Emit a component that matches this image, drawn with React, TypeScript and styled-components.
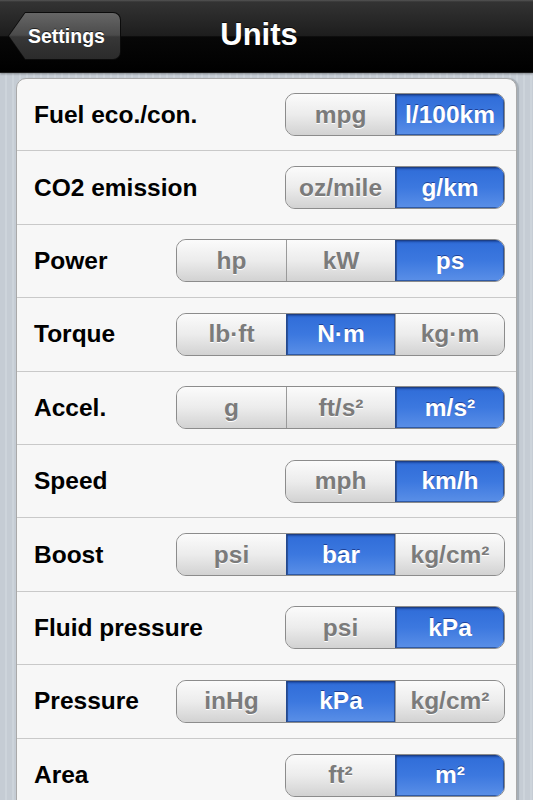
import React, { useState } from 'react';
import styled, { createGlobalStyle } from 'styled-components';

const GlobalStyle = createGlobalStyle`
  html, body {
    margin: 0;
    padding: 0;
    overflow: hidden;
  }
  body {
    font-family: "Liberation Sans", Arial, Helvetica, sans-serif;
    background: repeating-linear-gradient(90deg, #c5ccd4 0 5px, #cdd4db 5px 7px);
  }
  * {
    box-sizing: border-box;
  }
`;

const Screen = styled.div`
  width: 533px;
  min-height: 800px;
  display: flex;
  flex-direction: column;
`;

const NavBar = styled.div`
  height: 73px;
  display: grid;
  grid-template-columns: 1fr auto 1fr;
  align-items: center;
  padding: 0 8px;
  background: linear-gradient(#555 0, #333 2px, #1d1d1d 50%, #070707 51%, #000 100%);
  border-bottom: 1px solid #1e1e1e;
  box-shadow: 0 1px 2px rgba(0, 0, 0, 0.35);
`;

const BackButton = styled.button`
  justify-self: start;
  width: 113px;
  height: 48px;
  padding: 1px;
  border: none;
  border-radius: 0 8px 8px 0;
  background: #0c0c0c;
  clip-path: polygon(17px 0, 100% 0, 100% 100%, 17px 100%, 0 50%);
  cursor: pointer;
`;

const BackFace = styled.span`
  display: flex;
  align-items: center;
  height: 100%;
  padding-left: 19px;
  border-radius: 0 7px 7px 0;
  clip-path: polygon(16.3px 0, 100% 0, 100% 100%, 16.3px 100%, 0 50%);
  background: linear-gradient(#666 0, #4b4b4b 48%, #373737 52%, #2b2b2b 100%);
  color: #fff;
  font-family: "Liberation Sans", Arial, sans-serif;
  font-weight: bold;
  font-size: 19.5px;
  text-shadow: 0 -1px 0 rgba(0, 0, 0, 0.6);
`;

const Title = styled.h1`
  margin: 0 15px 2px 0;
  color: #fff;
  font-size: 31px;
  font-weight: bold;
  text-shadow: 0 -1px 0 rgba(0, 0, 0, 0.7);
`;

const Card = styled.div`
  margin: 5px 16px 0;
  background: #f7f7f7;
  border: 1px solid #a9a9a9;
  border-radius: 10px;
  box-shadow: 2px 0 1px rgba(120, 128, 138, 0.45);
`;

const Row = styled.div`
  height: 73.4px;
  display: flex;
  align-items: center;
  justify-content: space-between;
  padding: 0 11px 0 17px;
  border-bottom: 1px solid #c9c9c9;

  &:first-child {
    height: 72.4px;
  }
  &:last-child {
    border-bottom: none;
  }
`;

const Label = styled.span`
  font-size: 24.5px;
  font-weight: bold;
  color: #000;
`;

const Segmented = styled.div`
  display: flex;
  height: 43px;
  border: 1px solid #8c8c8c;
  border-radius: 10px;
  overflow: hidden;
  background: #ddd;
`;

const Segment = styled.button<{ $active: boolean }>`
  width: 109px;
  height: 100%;
  margin: 0;
  padding: 0;
  border: none;
  border-left: 1px solid ${(p) => (p.$active ? '#24498f' : '#9a9a9a')};
  font-family: "Liberation Sans", Arial, sans-serif;
  font-size: 24.5px;
  font-weight: bold;
  cursor: pointer;
  color: ${(p) => (p.$active ? '#fff' : '#7b7b7b')};
  text-shadow: ${(p) => (p.$active ? '0 -1px 0 rgba(0, 0, 60, 0.45)' : '0 1px 0 #fff')};
  background: ${(p) =>
    p.$active
      ? 'linear-gradient(#2f6cd8 0, #3c78df 50%, #5a8fe7 100%)'
      : 'linear-gradient(#fbfbfb 0, #ececec 50%, #d2d2d2 100%)'};
  box-shadow: ${(p) => (p.$active ? 'inset 0 2px 2px rgba(0, 20, 80, 0.4), inset 0 0 0 1px #2f5aa6' : 'none')};

  &:first-child {
    border-left: none;
  }
`;

type Setting = { label: string; options: string[]; selected: number };

const settings: Setting[] = [
  { label: 'Fuel eco./con.', options: ['mpg', 'l/100km'], selected: 1 },
  { label: 'CO2 emission', options: ['oz/mile', 'g/km'], selected: 1 },
  { label: 'Power', options: ['hp', 'kW', 'ps'], selected: 2 },
  { label: 'Torque', options: ['lb·ft', 'N·m', 'kg·m'], selected: 1 },
  { label: 'Accel.', options: ['g', 'ft/s²', 'm/s²'], selected: 2 },
  { label: 'Speed', options: ['mph', 'km/h'], selected: 1 },
  { label: 'Boost', options: ['psi', 'bar', 'kg/cm²'], selected: 1 },
  { label: 'Fluid pressure', options: ['psi', 'kPa'], selected: 1 },
  { label: 'Pressure', options: ['inHg', 'kPa', 'kg/cm²'], selected: 1 },
  { label: 'Area', options: ['ft²', 'm²'], selected: 1 },
];

const App = (): JSX.Element => {
  const [choice, setChoice] = useState<number[]>(settings.map((s) => s.selected));

  const pick = (row: number, idx: number) => {
    setChoice((prev) => prev.map((v, i) => (i === row ? idx : v)));
  };

  return (
    <Screen>
      <GlobalStyle />
      <NavBar>
        <BackButton>
          <BackFace>Settings</BackFace>
        </BackButton>
        <Title>Units</Title>
        <span />
      </NavBar>
      <Card>
        {settings.map((s, row) => (
          <Row key={s.label}>
            <Label>{s.label}</Label>
            <Segmented>
              {s.options.map((opt, idx) => (
                <Segment key={opt} $active={choice[row] === idx} onClick={() => pick(row, idx)}>
                  {opt}
                </Segment>
              ))}
            </Segmented>
          </Row>
        ))}
      </Card>
    </Screen>
  );
};

export default App;
